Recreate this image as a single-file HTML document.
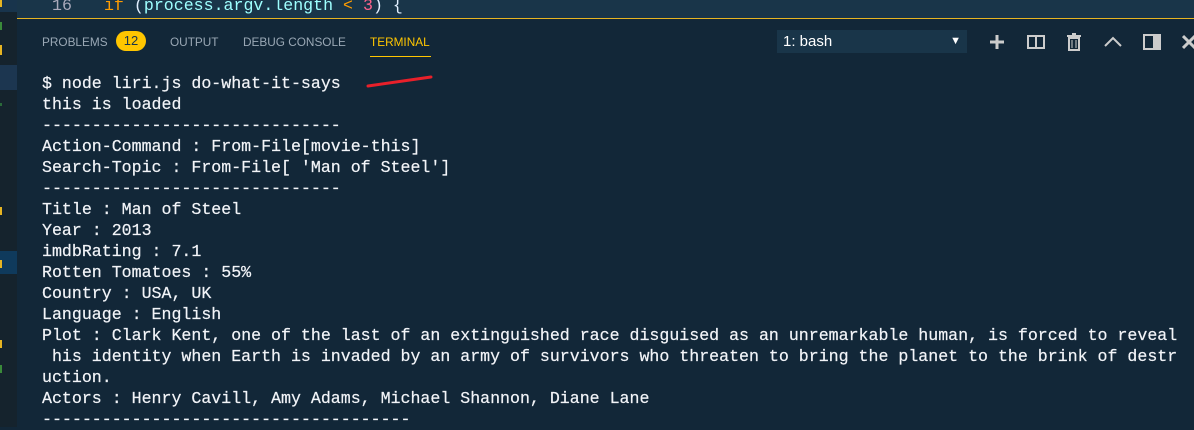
<!DOCTYPE html>
<html><head><meta charset="utf-8"><style>
*{margin:0;padding:0;box-sizing:border-box}
body{width:1194px;height:427px;overflow:hidden;background:#122738;position:relative;font-family:"Liberation Sans",sans-serif}
#side{position:absolute;left:0;top:0;width:17px;height:427px;background:#15232d}
.m{position:absolute;left:0;width:2px}
.hl{position:absolute;left:0;width:17px;background:#1c3650}
#top{position:absolute;left:17px;top:0;right:0;height:19px;background:#193549;border-bottom:1px solid #e6b422;overflow:hidden}
#top .ln{position:absolute;left:35px;top:-4px;color:#aab;font:16.6px "Liberation Mono",monospace}
#top .code{position:absolute;left:87px;top:-4px;font:16.6px "Liberation Mono",monospace;color:#9effff;white-space:pre}
.tab{position:absolute;top:35px;font-size:11.8px;color:#9aa8b5}
#badge{position:absolute;left:116px;top:31px;width:30px;height:20px;border-radius:10px;background:#ffc600;color:#193549;font-size:13px;text-align:center;line-height:20px}
#sel{position:absolute;left:777px;top:30px;width:190px;height:23px;background:#193549;color:#fff;font-size:15px;padding-left:6px;line-height:23px}
#term{position:absolute;left:42px;top:73px;font:16.6px/21px "Liberation Mono",monospace;color:#f2f4f8;white-space:pre;-webkit-text-stroke:0.2px #f2f4f8}
.ic{position:absolute;top:33px}
</style></head><body>
<div id="side">
<div class="hl" style="top:0;height:12px;background:#18344c"></div>
<div class="hl" style="top:65px;height:25px"></div>
<div class="hl" style="top:251px;height:23px;background:#0f3a5c"></div>
<div class="m" style="top:0;height:7px;background:#e6b422"></div>
<div class="m" style="top:22px;height:8px;background:#3a8a3a"></div>
<div class="m" style="top:45px;height:10px;background:#e6b422"></div>
<div class="m" style="top:103px;height:3px;background:#2a6a3a"></div>
<div class="m" style="top:207px;height:8px;background:#e6b422"></div>
<div class="m" style="top:260px;height:8px;background:#e6b422"></div>
<div class="m" style="top:340px;height:8px;background:#e6b422"></div>
<div class="m" style="top:365px;height:8px;background:#3a8a3a"></div>
</div>
<div id="top"><span class="ln">16</span><span class="code"><span style="color:#ff9d00">if</span> <span style="color:#e1efff">(</span>process.argv.length <span style="color:#ff9d00">&lt;</span> <span style="color:#ff628c">3</span><span style="color:#e1efff">) {</span></span></div>
<div class="tab" style="left:42px">PROBLEMS</div>
<div id="badge">12</div>
<div class="tab" style="left:170px">OUTPUT</div>
<div class="tab" style="left:243px">DEBUG CONSOLE</div>
<div class="tab" style="left:370px;color:#ffc600">TERMINAL</div>
<div style="position:absolute;left:370px;top:56px;width:61px;height:1px;background:#ffc600"></div>
<div id="sel">1: bash<span style="position:absolute;right:6px;top:0;font-size:11px">▼</span></div>
<svg class="ic" style="left:988px" width="18" height="18"><path d="M9 2v14M2 9h14" stroke="#ccc" stroke-width="3"/></svg>
<svg class="ic" style="left:1027px" width="18" height="18"><rect x="1" y="3" width="16" height="12" fill="none" stroke="#ccc" stroke-width="2"/><path d="M9 3v12" stroke="#ccc" stroke-width="2"/></svg>
<svg class="ic" style="left:1066px" width="16" height="18"><rect x="1" y="2" width="14" height="2" fill="#ccc"/><rect x="6" y="0" width="4" height="2" fill="#ccc"/><path d="M3 5h10v12H3z" fill="none" stroke="#ccc" stroke-width="2"/><path d="M6 7v8M10 7v8" stroke="#ccc"/></svg>
<svg class="ic" style="left:1103px" width="20" height="18"><path d="M2 13L10 5l8 8" fill="none" stroke="#ccc" stroke-width="2"/></svg>
<svg class="ic" style="left:1143px" width="18" height="18"><rect x="1" y="2" width="16" height="14" fill="none" stroke="#ccc" stroke-width="2"/><rect x="10" y="2" width="7" height="14" fill="#ccc"/></svg>
<svg class="ic" style="left:1182px" width="14" height="18"><path d="M1 3l12 12M13 3L1 15" stroke="#ccc" stroke-width="3"/></svg>
<svg style="position:absolute;left:365px;top:74px" width="70" height="16"><path d="M3 12L66 3" stroke="#e8202a" stroke-width="3" stroke-linecap="round"/></svg>
<div id="term">$ node liri.js do-what-it-says
this is loaded
------------------------------
Action-Command : From-File[movie-this]
Search-Topic : From-File[ 'Man of Steel']
------------------------------
Title : Man of Steel
Year : 2013
imdbRating : 7.1
Rotten Tomatoes : 55%
Country : USA, UK
Language : English
Plot : Clark Kent, one of the last of an extinguished race disguised as an unremarkable human, is forced to reveal
 his identity when Earth is invaded by an army of survivors who threaten to bring the planet to the brink of destr
uction.
Actors : Henry Cavill, Amy Adams, Michael Shannon, Diane Lane
-------------------------------------</div>
</body></html>
